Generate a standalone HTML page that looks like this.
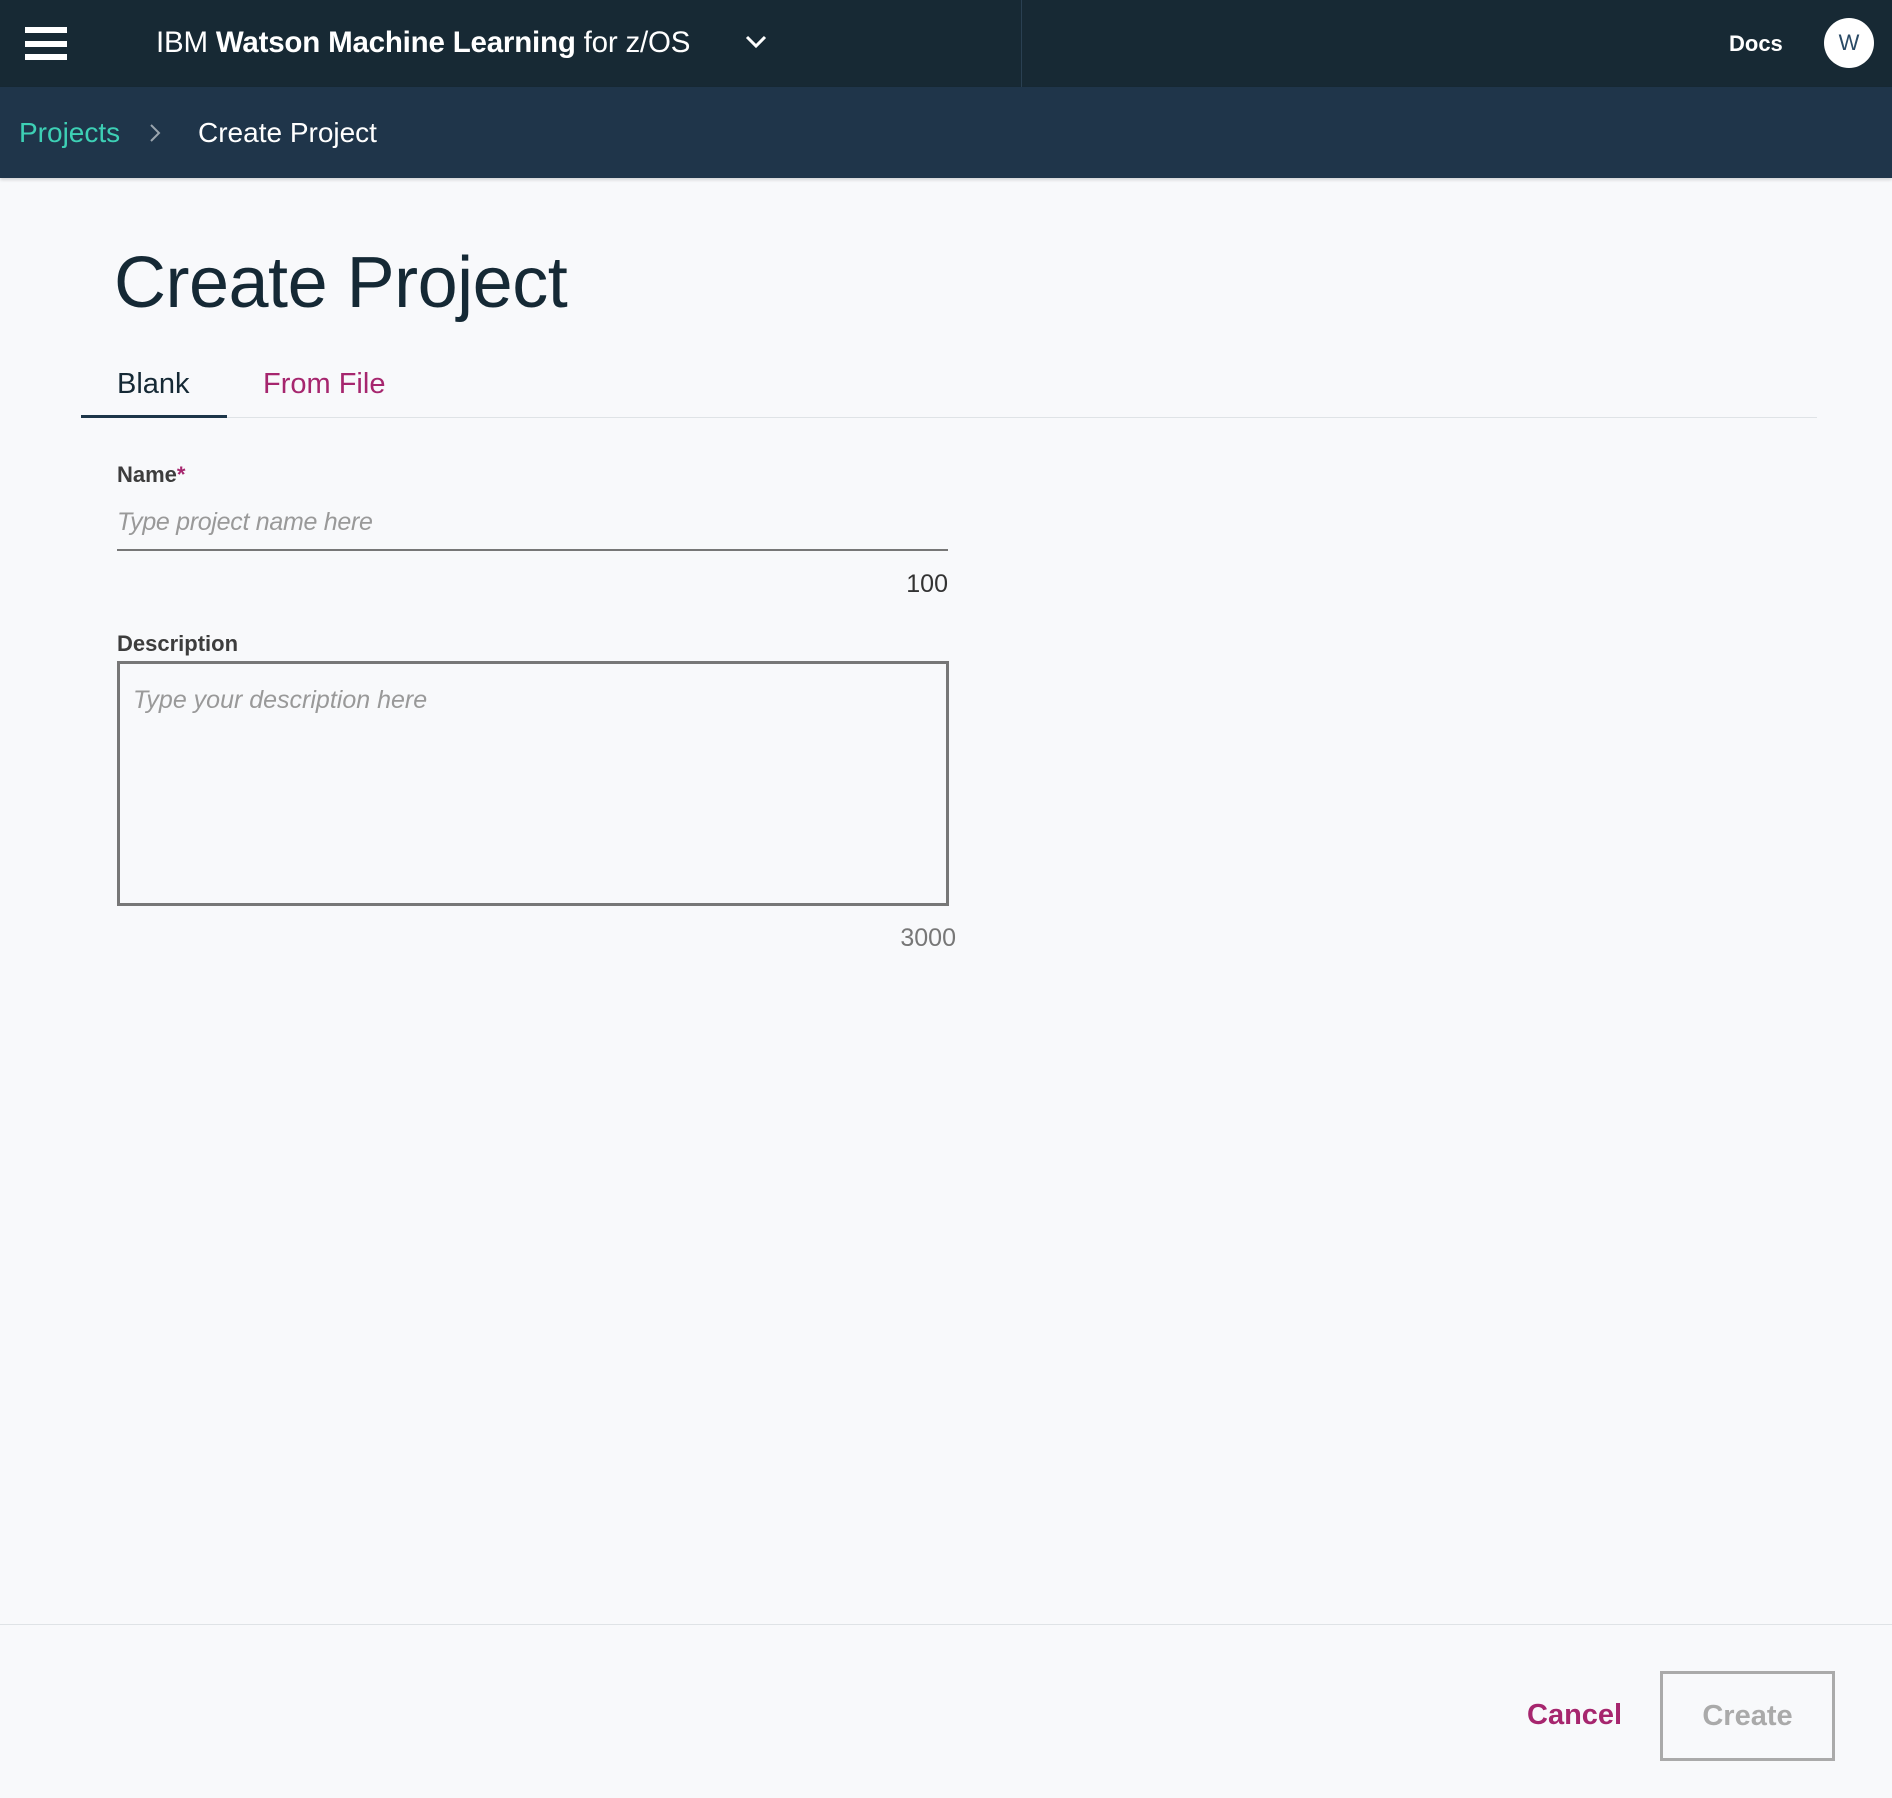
<!DOCTYPE html>
<html><head><meta charset="utf-8"><style>
*{margin:0;padding:0;box-sizing:border-box}
body{width:1892px;height:1798px;background:#f8f9fb;font-family:"Liberation Sans",Arial,sans-serif;position:relative;overflow:hidden}
.a{position:absolute;white-space:nowrap}
</style></head><body>
<div class="a" style="left:0;top:0;width:1892px;height:87px;background:#172934"></div>
<div class="a" style="left:1021px;top:0;width:1px;height:87px;background:#2a4052"></div>
<div class="a" style="left:0;top:87px;width:1892px;height:91px;background:#1f354a;box-shadow:0 2px 3px rgba(0,0,0,.15)"></div>
<div class="a" style="left:25px;top:27px;width:42px;height:6px;background:#fff"></div>
<div class="a" style="left:25px;top:41px;width:42px;height:6px;background:#fff"></div>
<div class="a" style="left:25px;top:54px;width:42px;height:6px;background:#fff"></div>
<div class="a" style="left:156px;top:25px;font-size:29.5px;line-height:36px;color:#fff;letter-spacing:-0.2px">IBM <b>Watson Machine Learning</b> for z/OS</div>
<svg class="a" style="left:744px;top:32px" width="24" height="18" viewBox="0 0 24 18"><path d="M3 5 L12 14 L21 5" fill="none" stroke="#fff" stroke-width="3"/></svg>
<div class="a" style="left:1729px;top:31px;font-size:22px;line-height:26px;color:#fff;font-weight:bold">Docs</div>
<div class="a" style="left:1824px;top:18px;width:50px;height:50px;border-radius:50%;background:#fff;color:#2a4a66;font-size:22px;line-height:50px;text-align:center">W</div>
<div class="a" style="left:19px;top:116px;font-size:28px;line-height:34px;color:#3dd0b5">Projects</div>
<svg class="a" style="left:148px;top:122px" width="14" height="22" viewBox="0 0 14 22"><path d="M3 3 L11 11 L3 19" fill="none" stroke="#9aa5ae" stroke-width="2"/></svg>
<div class="a" style="left:198px;top:116px;font-size:28px;line-height:34px;color:#fff">Create Project</div>
<div class="a" style="left:114px;top:238px;font-size:72px;line-height:90px;color:#152935;letter-spacing:-0.5px">Create Project</div>
<div class="a" style="left:117px;top:366px;font-size:29px;line-height:36px;color:#152935">Blank</div>
<div class="a" style="left:263px;top:366px;font-size:29px;line-height:36px;color:#a6266e">From File</div>
<div class="a" style="left:81px;top:417px;width:1736px;height:1px;background:#dfe3e6"></div>
<div class="a" style="left:81px;top:415px;width:146px;height:3px;background:#1d3649"></div>
<div class="a" style="left:117px;top:462px;font-size:22px;line-height:26px;color:#3d3d3d;font-weight:bold">Name<span style="color:#a6266e">*</span></div>
<div class="a" style="left:117px;top:507px;font-size:25px;line-height:30px;color:#999;font-style:italic;letter-spacing:-0.3px">Type project name here</div>
<div class="a" style="left:117px;top:549px;width:831px;height:2px;background:#777"></div>
<div class="a" style="left:848px;top:569px;width:100px;text-align:right;font-size:25px;line-height:30px;color:#333">100</div>
<div class="a" style="left:117px;top:631px;font-size:22px;line-height:26px;color:#3d3d3d;font-weight:bold">Description</div>
<div class="a" style="left:117px;top:661px;width:832px;height:245px;border:3px solid #777"></div>
<div class="a" style="left:133px;top:685px;font-size:25px;line-height:30px;color:#999;font-style:italic">Type your description here</div>
<div class="a" style="left:856px;top:923px;width:100px;text-align:right;font-size:25px;line-height:30px;color:#777">3000</div>
<div class="a" style="left:0;top:1624px;width:1892px;height:1px;background:#dfe3e6"></div>
<div class="a" style="left:1527px;top:1698px;font-size:29px;line-height:34px;color:#a6266e;font-weight:bold">Cancel</div>
<div class="a" style="left:1660px;top:1671px;width:175px;height:90px;border:3px solid #aaa;color:#aaa;font-size:29px;line-height:84px;text-align:center;font-weight:bold">Create</div>
</body></html>
